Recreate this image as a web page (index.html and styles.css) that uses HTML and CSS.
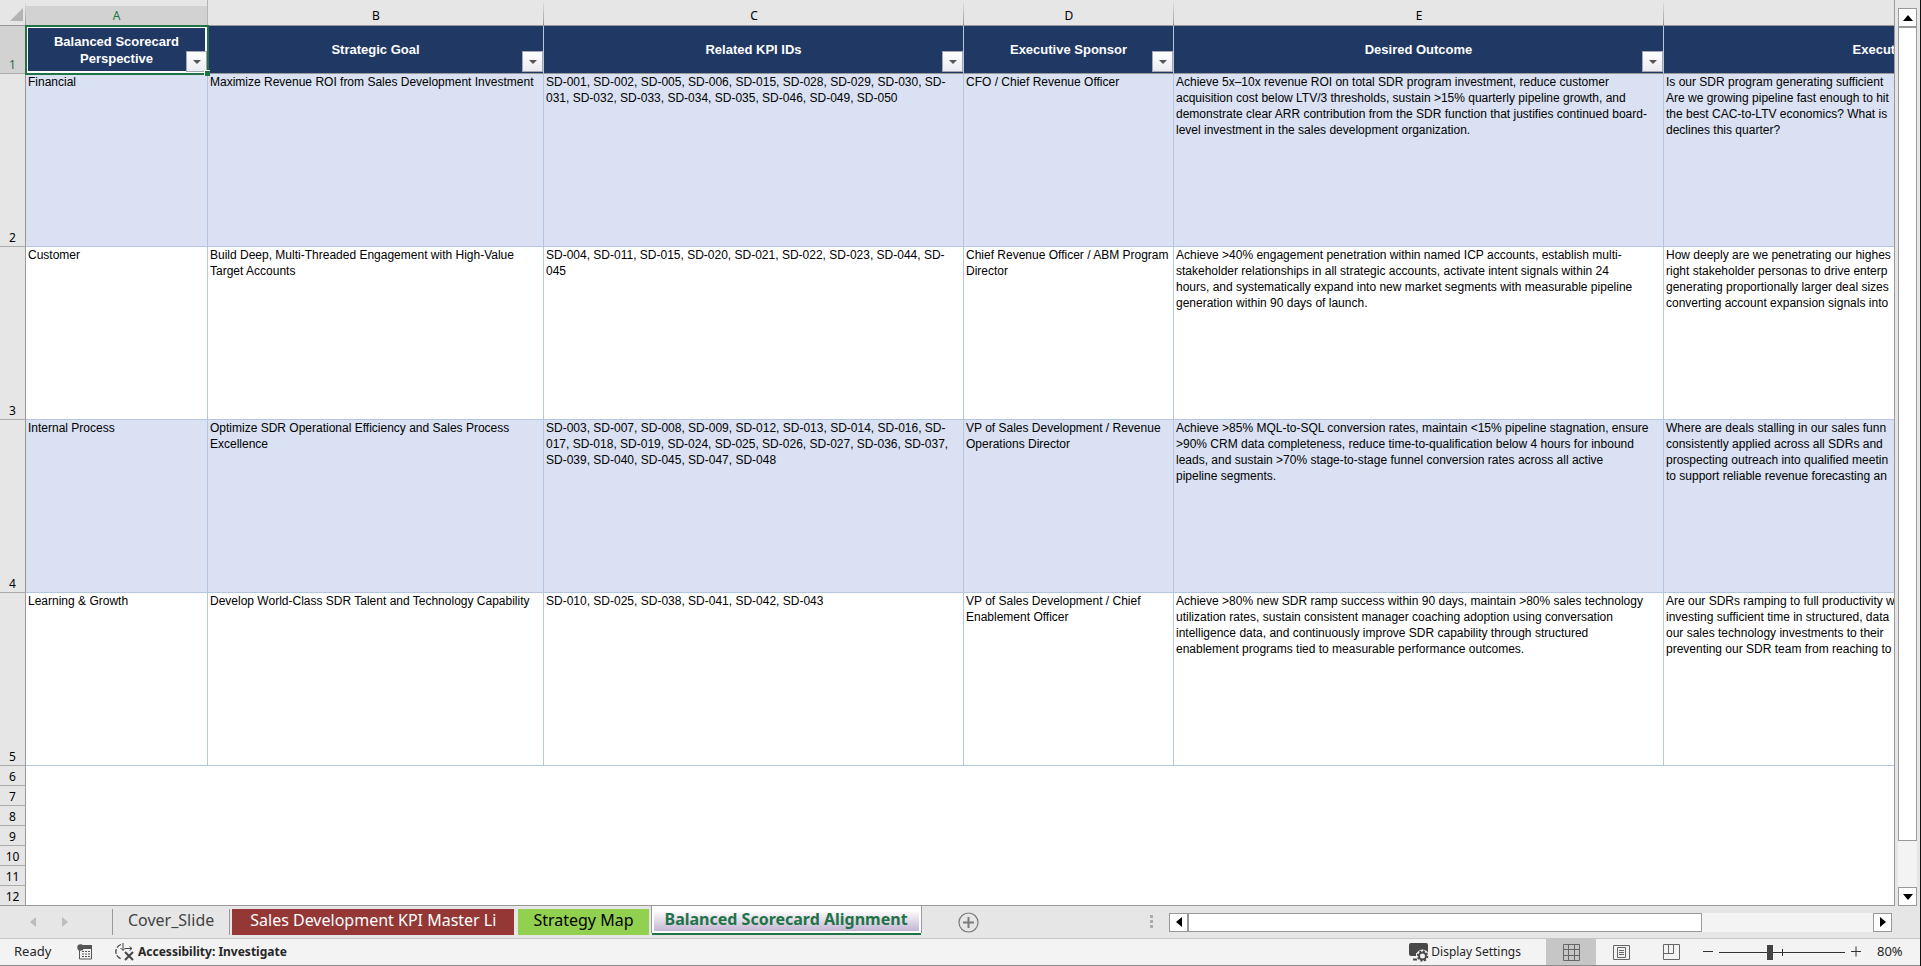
FILE: index.html
```html
<!DOCTYPE html>
<html lang="en">
<head>
    <meta charset="UTF-8">
    <meta name="viewport" content="width=device-width, initial-scale=1.0">
    <title>Balanced Scorecard Alignment</title>
    <link rel="stylesheet" href="styles.css">
</head>
<body>
    <div class="workbook">
        <div class="main">
            <div class="grid">
                <table class="sheet">
                    <colgroup>
                        <col class="col-head">
                        <col class="col-a">
                        <col class="col-b">
                        <col class="col-c">
                        <col class="col-d">
                        <col class="col-e">
                        <col class="col-f">
                    </colgroup>
                    <thead>
                        <tr class="letters">
                            <th class="corner"><svg width="14" height="14" viewBox="0 0 14 14"><path d="M13 0v13H0z" fill="#b4b4b4"/></svg></th>
                            <th class="active">A</th>
                            <th>B</th>
                            <th>C</th>
                            <th>D</th>
                            <th>E</th>
                            <th></th>
                        </tr>
                    </thead>
                    <tbody>
                        <tr class="titles">
                            <th class="num active">1</th>
                            <td class="selected">Balanced Scorecard<br>Perspective<button class="filter" aria-label="Filter perspective"></button><span class="handle"></span></td>
                            <td>Strategic Goal<button class="filter" aria-label="Filter goal"></button></td>
                            <td>Related KPI IDs<button class="filter" aria-label="Filter KPI IDs"></button></td>
                            <td>Executive Sponsor<button class="filter" aria-label="Filter sponsor"></button></td>
                            <td>Desired Outcome<button class="filter" aria-label="Filter outcome"></button></td>
                            <td>Executive Questions</td>
                        </tr>
                        <tr class="record tint">
                            <th class="num">2</th>
                            <td>Financial</td>
                            <td>Maximize Revenue ROI from Sales Development Investment</td>
                            <td>SD-001, SD-002, SD-005, SD-006, SD-015, SD-028, SD-029, SD-030, SD-<br>031, SD-032, SD-033, SD-034, SD-035, SD-046, SD-049, SD-050</td>
                            <td>CFO / Chief Revenue Officer</td>
                            <td>Achieve 5x–10x revenue ROI on total SDR program investment, reduce customer<br>acquisition cost below LTV/3 thresholds, sustain &gt;15% quarterly pipeline growth, and<br>demonstrate clear ARR contribution from the SDR function that justifies continued board-<br>level investment in the sales development organization.</td>
                            <td>Is our SDR program generating sufficient<br>Are we growing pipeline fast enough to hit<br>the best CAC-to-LTV economics? What is<br>declines this quarter?</td>
                        </tr>
                        <tr class="record">
                            <th class="num">3</th>
                            <td>Customer</td>
                            <td>Build Deep, Multi-Threaded Engagement with High-Value<br>Target Accounts</td>
                            <td>SD-004, SD-011, SD-015, SD-020, SD-021, SD-022, SD-023, SD-044, SD-<br>045</td>
                            <td>Chief Revenue Officer / ABM Program<br>Director</td>
                            <td>Achieve &gt;40% engagement penetration within named ICP accounts, establish multi-<br>stakeholder relationships in all strategic accounts, activate intent signals within 24<br>hours, and systematically expand into new market segments with measurable pipeline<br>generation within 90 days of launch.</td>
                            <td>How deeply are we penetrating our highes<br>right stakeholder personas to drive enterp<br>generating proportionally larger deal sizes<br>converting account expansion signals into</td>
                        </tr>
                        <tr class="record tint">
                            <th class="num">4</th>
                            <td>Internal Process</td>
                            <td>Optimize SDR Operational Efficiency and Sales Process<br>Excellence</td>
                            <td>SD-003, SD-007, SD-008, SD-009, SD-012, SD-013, SD-014, SD-016, SD-<br>017, SD-018, SD-019, SD-024, SD-025, SD-026, SD-027, SD-036, SD-037,<br>SD-039, SD-040, SD-045, SD-047, SD-048</td>
                            <td>VP of Sales Development / Revenue<br>Operations Director</td>
                            <td>Achieve &gt;85% MQL-to-SQL conversion rates, maintain &lt;15% pipeline stagnation, ensure<br>&gt;90% CRM data completeness, reduce time-to-qualification below 4 hours for inbound<br>leads, and sustain &gt;70% stage-to-stage funnel conversion rates across all active<br>pipeline segments.</td>
                            <td>Where are deals stalling in our sales funn<br>consistently applied across all SDRs and<br>prospecting outreach into qualified meetin<br>to support reliable revenue forecasting an</td>
                        </tr>
                        <tr class="record">
                            <th class="num">5</th>
                            <td>Learning &amp; Growth</td>
                            <td>Develop World-Class SDR Talent and Technology Capability</td>
                            <td>SD-010, SD-025, SD-038, SD-041, SD-042, SD-043</td>
                            <td>VP of Sales Development / Chief<br>Enablement Officer</td>
                            <td>Achieve &gt;80% new SDR ramp success within 90 days, maintain &gt;80% sales technology<br>utilization rates, sustain consistent manager coaching adoption using conversation<br>intelligence data, and continuously improve SDR capability through structured<br>enablement programs tied to measurable performance outcomes.</td>
                            <td>Are our SDRs ramping to full productivity w<br>investing sufficient time in structured, data<br>our sales technology investments to their<br>preventing our SDR team from reaching to</td>
                        </tr>
                        <tr class="blank"><th class="num">6</th><td colspan="6"></td></tr>
                        <tr class="blank"><th class="num">7</th><td colspan="6"></td></tr>
                        <tr class="blank"><th class="num">8</th><td colspan="6"></td></tr>
                        <tr class="blank"><th class="num">9</th><td colspan="6"></td></tr>
                        <tr class="blank"><th class="num">10</th><td colspan="6"></td></tr>
                        <tr class="blank"><th class="num">11</th><td colspan="6"></td></tr>
                        <tr class="blank"><th class="num">12</th><td colspan="6"></td></tr>
                    </tbody>
                </table>
            </div>
            <div class="vscroll">
                <button class="arrow" aria-label="Scroll up"><svg width="10" height="6" viewBox="0 0 10 6"><path d="M5 0l5 6H0z"/></svg></button>
                <div class="vtrack"><div class="vthumb"></div></div>
                <button class="arrow" aria-label="Scroll down"><svg width="10" height="6" viewBox="0 0 10 6"><path d="M0 0h10L5 6z"/></svg></button>
            </div>
        </div>

        <div class="tabbar">
            <div class="tab-nav">
                <button aria-label="Previous sheet"><svg width="6" height="10" viewBox="0 0 6 10"><path d="M6 0v10L0 5z" fill="#bdbdbd"/></svg></button>
                <button aria-label="Next sheet"><svg width="6" height="10" viewBox="0 0 6 10"><path d="M0 0v10l6-5z" fill="#bdbdbd"/></svg></button>
            </div>
            <div class="tabs">
                <button class="tab cover">Cover_Slide</button>
                <button class="tab red">Sales Development KPI Master Li</button>
                <button class="tab green">Strategy Map</button>
                <button class="tab current">Balanced Scorecard Alignment</button>
            </div>
            <button class="add" aria-label="New sheet"><svg width="21" height="21" viewBox="0 0 21 21" fill="none" stroke="#7b7b7b"><circle cx="10.500" cy="10.500" r="9.500" stroke-width="1.200"/><path d="M5 10.500h11M10.500 5v11" stroke-width="2"/></svg></button>
            <div class="hscroll">
                <svg class="grip" width="3" height="14" viewBox="0 0 3 14" fill="#ababab"><path d="M0 0h3v3H0zM0 5h3v3H0zM0 10h3v3H0z"/></svg>
                <button class="arrow" aria-label="Scroll left"><svg width="6" height="10" viewBox="0 0 6 10"><path d="M6 0v10L0 5z"/></svg></button>
                <div class="htrack"><div class="hthumb"></div></div>
                <button class="arrow" aria-label="Scroll right"><svg width="6" height="10" viewBox="0 0 6 10"><path d="M0 0v10l6-5z"/></svg></button>
            </div>
        </div>

        <div class="status">
            <span class="ready">Ready</span>
            <button class="macro" aria-label="Record macro"><svg width="16" height="16" viewBox="0 0 16 16"><path d="M2.500 5v10h12V2" fill="none" stroke="#555"/><path d="M6 1h9v4H6z" fill="#555"/><circle cx="3.500" cy="3.500" r="3.200" fill="#555"/><path d="M5 7.500h8M5 10h8M5 12.500h8" stroke="#555" stroke-dasharray="2 1"/></svg></button>
            <button class="access"><svg width="20" height="18" viewBox="0 0 20 18" fill="none" stroke="#444"><path d="M6 1.500A7.500 7.500 0 0 0 7 16" stroke-width="1.300" stroke-dasharray="5 1.500"/><path d="M8 0v7M5.500 5L8 7.500 10.500 5M10 5.500h7M14.500 3.500l2.500 2-2.500 2"/><path d="M10 9l8 8M18 9l-8 8" stroke-width="2"/></svg>Accessibility: Investigate</button>
            <div class="status-right">
                <button class="display"><svg width="20" height="19" viewBox="0 0 20 19"><path d="M2 0h15q2 0 2 2v8H7v3H2q-2 0-2-2V2q0-2 2-2z" fill="#484848"/><path d="M4 15.500h4v2H4z" fill="#484848"/><circle cx="13.500" cy="13" r="4" fill="none" stroke="#f3f3f3" stroke-width="5"/><circle cx="13.500" cy="13" r="3.500" fill="none" stroke="#484848" stroke-width="2"/><circle cx="13.500" cy="13" r="5" fill="none" stroke="#484848" stroke-width="1.500" stroke-dasharray="2 1.900"/></svg>Display Settings</button>
                <button class="view on" aria-label="Normal"><svg width="17" height="17" viewBox="0 0 17 17" fill="none" stroke="#666"><path d="M.5.5h16v16H.5zM5.500.5v16M11.500.5v16M.5 5.500h16M.5 11.500h16"/></svg></button>
                <button class="view" aria-label="Page layout"><svg width="17" height="15" viewBox="0 0 17 15" fill="none" stroke="#666"><path d="M.5.5h16v14H.5zM4.500 2.500h8v10h-8zM6 5.500h5M6 7.500h5M6 9.500h5"/></svg></button>
                <button class="view" aria-label="Page break preview"><svg width="17" height="16" viewBox="0 0 17 16" fill="none" stroke="#666"><path d="M.5.5h16v15H.5zM5.500.5v9M10.500.5v9M.5 9.500h10"/></svg></button>
                <div class="zoom">
                    <button aria-label="Zoom out"><svg width="10" height="12" viewBox="0 0 10 12"><path d="M0 5.500h10" stroke="#333"/></svg></button>
                    <input type="range" class="zoom-range" min="0" max="100" value="40" aria-label="Zoom">
                    <button aria-label="Zoom in"><svg width="10" height="12" viewBox="0 0 10 12"><path d="M0 5.500h10M5 .5v10" stroke="#333"/></svg></button>
                </div>
                <span class="percent">80%</span>
            </div>
        </div>
    </div>
</body>
</html>
```
FILE: styles.css
```css
* {
    margin: 0;
    padding: 0;
    box-sizing: border-box;
}

body {
    font-family: "Noto Sans", "Open Sans", sans-serif;
    background-color: #e6e6e6;
    color: #000;
    overflow: hidden;
}

button {
    border: none;
    background: transparent;
    font-family: inherit;
    cursor: pointer;
}

svg {
    display: block;
}

.workbook {
    display: flex;
    flex-direction: column;
    height: 100vh;
    border-right: 1px solid #111;
}

.main {
    display: flex;
    flex: 1;
    min-height: 0;
}

.grid {
    flex: 1;
    min-width: 0;
    overflow: hidden;
    background-color: #fff;
    border-right: 1px solid #999;
    border-bottom: 1px solid #999;
}

/* sheet */
.sheet {
    width: 2170px;
    table-layout: fixed;
    border-collapse: separate;
    border-spacing: 0;
}

.col-head { width: 26px; }
.col-a { width: 182px; }
.col-b { width: 336px; }
.col-c { width: 420px; }
.col-d { width: 210px; }
.col-e { width: 490px; }
.col-f { width: 506px; }

.letters th {
    height: 26px;
    padding-top: 6px;
    background-color: #e6e6e6;
    background-image: linear-gradient(#e6e6e6, #999);
    background-size: 1px 100%;
    background-position: right;
    background-repeat: no-repeat;
    border-bottom: 1px solid #999;
    font-size: 12px;
    line-height: 16px;
    font-weight: normal;
}

.letters .corner {
    padding: 4px 0 0 10px;
}

.letters .active {
    background: linear-gradient(#e6e6e6 6px, #d2d2d2 6px);
    border-right: 1px solid #b4b4b4;
}

.num {
    background-color: #e6e6e6;
    border-right: 1px solid #999;
    border-bottom: 1px solid #ababab;
    vertical-align: bottom;
    font-size: 12px;
    line-height: 16px;
    font-weight: normal;
}

.active {
    color: #217346;
}

.num.active {
    background-color: #d2d2d2;
}

.titles td {
    position: relative;
    height: 48px;
    background-color: #203864;
    border-right: 1px solid #b4c6e0;
    border-bottom: 1px solid #999;
    color: #fff;
    font-family: "Liberation Sans", Arial, sans-serif;
    font-size: 13px;
    line-height: 17px;
    font-weight: bold;
    text-align: center;
}

.titles .selected {
    outline: 2px solid #217346;
    outline-offset: -1px;
    box-shadow: inset 0 0 0 2px #fff;
    z-index: 1;
}

.filter {
    position: absolute;
    right: 0;
    bottom: 1px;
    width: 21px;
    height: 21px;
    border: 1px solid #a6a6b0;
    background: linear-gradient(#fff, #e9ecf2);
}

.filter::after {
    content: "";
    position: absolute;
    left: 6px;
    top: 8px;
    border: 4px solid transparent;
    border-top-color: #555;
    border-bottom: 0;
}

.handle {
    position: absolute;
    right: -3px;
    bottom: -3px;
    width: 6px;
    height: 6px;
    background-color: #217346;
    border-top: 1px solid #fff;
    border-left: 1px solid #fff;
}

.record td {
    height: 173px;
    padding: 0 2px;
    border-right: 1px solid #b4c6e0;
    border-bottom: 1px solid #b4c6e0;
    vertical-align: top;
    font-family: "Liberation Sans", Arial, sans-serif;
    font-size: 12px;
    line-height: 16px;
    white-space: nowrap;
}

.tint td {
    background-color: #d9e1f2;
}

.blank th {
    height: 20px;
}

/* scrollbars */
.arrow {
    display: flex;
    align-items: center;
    justify-content: center;
    flex: none;
    width: 19px;
    height: 19px;
    background-color: #fff;
    border: 1px solid #999;
}

.vscroll {
    display: flex;
    flex-direction: column;
    width: 25px;
    padding: 8px 3px 0;
}

.vtrack {
    flex: 1;
    background-color: #f3f3f3;
}

.vthumb {
    height: 94.6%;
    background-color: #fff;
    border: 1px solid #999;
}

/* sheet tabs */
.tabbar {
    display: flex;
    height: 32px;
}

.tab-nav {
    display: flex;
    align-items: center;
    gap: 26px;
    width: 112px;
    padding-left: 30px;
}

.tabs {
    display: flex;
    align-items: flex-start;
}

.tab {
    height: 26px;
    margin-top: 3px;
    padding: 0 18px 4px;
    font-size: 16px;
    line-height: 22px;
    white-space: nowrap;
}

.cover {
    padding: 0 15px 4px;
    border-left: 1px solid #999;
    border-right: 1px solid #999;
    color: #444;
}

.red {
    margin-left: 2px;
    background-color: #953735;
    color: #fff;
}

.green {
    margin-left: 4px;
    padding: 0 15px 4px;
    background-color: #92d050;
}

.current {
    height: 27px;
    margin: 0 0 0 3px;
    padding: 0 11px;
    background: linear-gradient(#fff 4px, #c3b6d3) #fff;
    border: 2px solid #fff;
    border-top: 0;
    box-shadow: 0 2px #217346, 1px 0 #999, -1px 0 #999;
    color: #217346;
    font-weight: bold;
}

.add {
    margin-left: 37px;
}

.hscroll {
    display: flex;
    align-items: center;
    width: 742px;
    margin-left: auto;
    margin-right: 28px;
}

.grip {
    margin-right: 16px;
}

.htrack {
    flex: 1;
    height: 19px;
    background-color: #f3f3f3;
}

.hthumb {
    width: 75%;
    height: 19px;
    background-color: #fff;
    border: 1px solid #999;
}

/* status bar */
.status {
    display: flex;
    align-items: center;
    height: 28px;
    background-color: #f3f3f3;
    border-top: 1px solid #c6c6c6;
    border-bottom: 1px solid #8c8c8c;
    color: #262626;
    font-size: 13px;
}

.status button {
    display: flex;
    align-items: center;
    color: inherit;
    font-size: 12px;
    line-height: 18px;
}

.ready {
    width: 77px;
    padding: 0 0 2px 14px;
}

.status .access {
    margin-left: 22px;
    gap: 3px;
    font-weight: bold;
}

.status-right {
    display: flex;
    align-items: center;
    margin-left: auto;
    height: 100%;
}

.status .display {
    gap: 2px;
    margin-right: 25px;
}

.status .view {
    justify-content: center;
    width: 50px;
    height: 100%;
}

.status .on {
    background-color: #c6c6c6;
}

.zoom {
    display: flex;
    align-items: center;
    gap: 6px;
    margin-left: 7px;
}

.zoom-range {
    appearance: none;
    width: 126px;
    height: 15px;
    background: linear-gradient(#333, #333) 50% 50% / 1px 7px no-repeat, linear-gradient(#333, #333) center / 100% 1px no-repeat;
}

.zoom-range::-webkit-slider-thumb {
    appearance: none;
    width: 6px;
    height: 15px;
    background-color: #444;
}

.percent {
    width: 59px;
    padding: 0 0 2px 16px;
}
```
